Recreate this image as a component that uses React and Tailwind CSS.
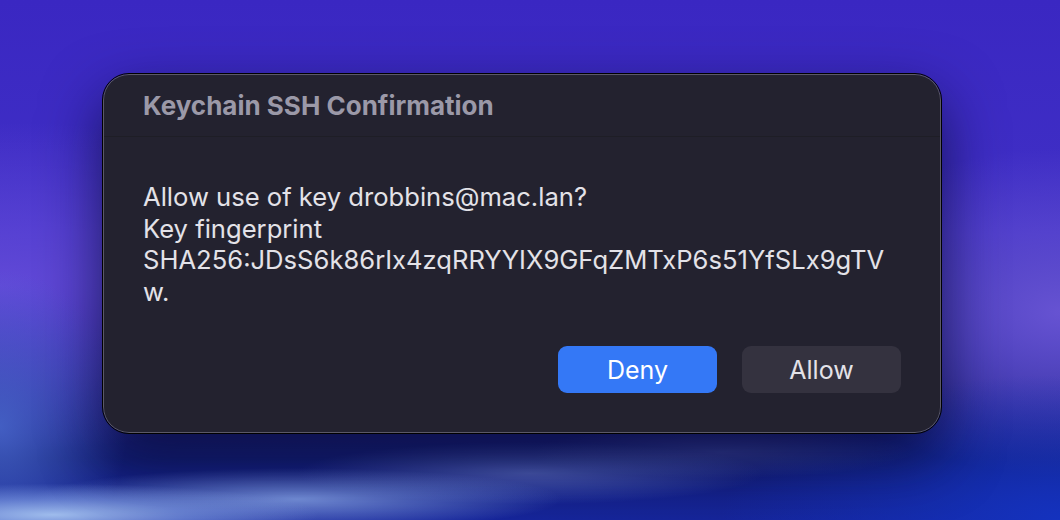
export default function App() {
  return (
    <div
      className="w-[1060px] h-[520px] overflow-hidden pt-[74px] pl-[103px] bg-[radial-gradient(ellipse_25%_6%_at_5%_99%,rgba(165,195,240,0.95)_0%,rgba(130,160,230,0.6)_50%,transparent_100%),radial-gradient(ellipse_25%_6%_at_28%_96%,rgba(140,170,235,0.8)_0%,transparent_100%),radial-gradient(ellipse_22%_6%_at_50%_91%,rgba(120,140,220,0.55)_0%,transparent_100%),radial-gradient(ellipse_18%_5%_at_68%_87%,rgba(110,120,210,0.35)_0%,transparent_100%),radial-gradient(ellipse_12%_30%_at_0%_82%,rgba(70,100,200,0.9)_0%,transparent_100%),radial-gradient(ellipse_40%_35%_at_100%_100%,rgba(20,50,190,1)_0%,transparent_80%),radial-gradient(ellipse_60%_45%_at_0%_55%,rgba(100,75,218,0.95)_0%,transparent_70%),radial-gradient(ellipse_35%_45%_at_100%_60%,rgba(105,85,212,0.95)_0%,transparent_70%),linear-gradient(180deg,#3a27c2_0%,#4030c6_45%,#2a2a9a_72%,#121e78_88%,#16259a_100%)]"
      style={{ fontFamily: "Inter, 'Noto Sans', sans-serif" }}
    >
      <div className="w-[838px] h-[359px] rounded-[26px] bg-[#23222f] border border-[#5b5967] outline outline-1 outline-black shadow-[0_24px_60px_rgba(8,10,50,0.75)] flex flex-col">
        <div className="h-[62px] flex items-center pl-[39px] border-b border-[#1e1e26]">
          <span className="text-[26px] font-bold text-[#9b99a8]">
            Keychain SSH Confirmation
          </span>
        </div>
        <div className="pt-[44px] pl-[39px] text-[25.6px] leading-[31.7px] text-[#e3e2e8]">
          <div>Allow use of key drobbins@mac.lan?</div>
          <div>Key fingerprint</div>
          <div>SHA256:JDsS6k86rIx4zqRRYYIX9GFqZMTxP6s51YfSLx9gTV</div>
          <div>w.</div>
        </div>
        <div className="mt-auto mb-[39px] mr-[39px] flex justify-end gap-[25px]">
          <button className="w-[159px] h-[47px] rounded-[9px] bg-[#3478f6] text-white text-[25px] font-normal pt-[3px]">
            Deny
          </button>
          <button className="w-[159px] h-[47px] rounded-[9px] bg-[#34323f] text-[#e3e2e8] text-[25px] font-normal pt-[3px]">
            Allow
          </button>
        </div>
      </div>
    </div>
  );
}
